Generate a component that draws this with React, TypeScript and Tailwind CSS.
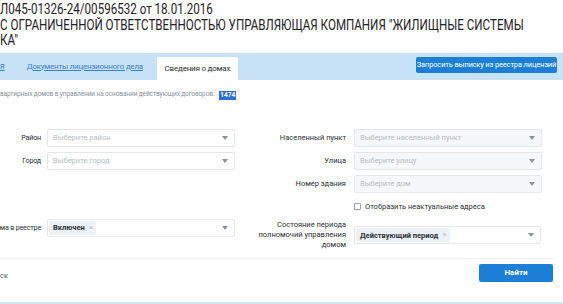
import React from "react";

const Arrow = () => (
  <svg width="6" height="4" viewBox="0 0 6 4" className="shrink-0">
    <path d="M0 0 H6 L3 4 Z" fill="#8c9197" />
  </svg>
);

const Select = ({ placeholder, disabled }: { placeholder: string; disabled?: boolean }) => (
  <div
    className={`flex h-[18px] w-[188px] shrink-0 items-center justify-between rounded-[2px] border border-[#e4e7ea] pl-[5px] pr-[6px] ${
      disabled ? "bg-[#f6f7f8]" : "bg-white"
    }`}
  >
    <span className="text-[7.5px] text-[#b8bcc1]">{placeholder}</span>
    <Arrow />
  </div>
);

const ChipSelect = ({ chip, w }: { chip: string; w: string }) => (
  <div className={`flex h-[18px] shrink-0 items-center justify-between rounded-[2px] border border-[#e4e7ea] bg-white pl-[1px] pr-[6px] ${w}`}>
    <div className="flex h-[14px] items-center gap-[4px] rounded-[2px] bg-[#edf1f5] pl-[4px] pr-[3px]">
      <span className="text-[7.5px] font-bold text-[#2b2f33]">{chip}</span>
      <span className="text-[8px] leading-none text-[#b9bec4]">×</span>
    </div>
    <Arrow />
  </div>
);

const LeftRow = ({ label, children }: { label: string; children: React.ReactNode }) => (
  <div className="flex items-center">
    <div className="flex w-[41px] shrink-0 justify-end">
      <span className="shrink-0 whitespace-nowrap text-[7.2px] tracking-[-0.2px] text-[#2b2f33]">{label}</span>
    </div>
    <div className="ml-[6px]">{children}</div>
  </div>
);

const RightRow = ({ label, children }: { label: React.ReactNode; children: React.ReactNode }) => (
  <div className="flex items-center">
    <div className="flex w-[64px] shrink-0 justify-end">
      <span className="shrink-0 whitespace-nowrap text-right text-[7.5px] leading-[10px] text-[#2b2f33]">{label}</span>
    </div>
    <div className="ml-[8px]">{children}</div>
  </div>
);

export default function App() {
  return (
    <div
      className="relative h-[304px] w-[563px] overflow-hidden bg-white"
      style={{ fontFamily: "Roboto, 'Liberation Sans', sans-serif" }}
    >
      {/* Title */}
      <div className="h-[53px] pt-[2px]">
        <div className="origin-left scale-x-[0.8] w-[704px] text-[14.5px] leading-[15.5px] text-[#1f2226]">
          <div>Л045-01326-24/00596532 от 18.01.2016</div>
          <div>С ОГРАНИЧЕННОЙ ОТВЕТСТВЕННОСТЬЮ УПРАВЛЯЮЩАЯ КОМПАНИЯ "ЖИЛИЩНЫЕ СИСТЕМЫ</div>
          <div>КА"</div>
        </div>
      </div>

      {/* Tab bar */}
      <div className="flex h-[27px] items-end bg-[#c7e2f7]">
        <div className="flex h-full items-center">
          <span className="text-[8.5px] text-[#3a82c8] underline">я</span>
        </div>
        <div className="ml-[22px] flex h-full items-center">
          <span className="text-[8px] tracking-[-0.25px] text-[#3a82c8] underline">Документы лицензионного дела</span>
        </div>
        <div className="ml-[14px] flex h-[23px] w-[81px] items-center justify-center rounded-t-[2px] bg-white">
          <span className="text-[8px] tracking-[-0.2px] text-[#2b2f33]">Сведения о домах</span>
        </div>
        <div className="ml-auto mr-[6px] flex h-full items-start pt-[4px]">
          <div className="flex h-[16px] w-[141px] items-center justify-center rounded-[2px] bg-[#1b7fd8]">
            <span className="text-[7.5px] tracking-[-0.15px] text-white">Запросить выписку из реестра лицензий</span>
          </div>
        </div>
      </div>

      {/* Count */}
      <div className="mt-[10px] flex h-[10px] items-center">
        <span className="text-[6.5px] tracking-[-0.1px] text-[#8b9096]">
          вартирных домов в управлении на основании действующих договоров:
        </span>
        <span className="ml-[5px] bg-[#2c6fd6] px-[1px] text-[6.5px] font-bold leading-[9px] text-white">1474</span>
      </div>

      {/* Form */}
      <div className="mt-[29px] flex">
        <div className="flex w-[282px] flex-col gap-[5px]">
          <LeftRow label="Район">
            <Select placeholder="Выберите район" />
          </LeftRow>
          <LeftRow label="Город">
            <Select placeholder="Выберите город" />
          </LeftRow>
          <div className="mt-[44px]">
            <LeftRow label="ма в реестре">
              <ChipSelect chip="Включен" w="w-[188px]" />
            </LeftRow>
          </div>
        </div>
        <div className="flex flex-col gap-[5px]">
          <RightRow label="Населенный пункт">
            <Select placeholder="Выберите населенный пункт" disabled />
          </RightRow>
          <RightRow label="Улица">
            <Select placeholder="Выберите улицу" disabled />
          </RightRow>
          <RightRow label="Номер здания">
            <Select placeholder="Выберите дом" disabled />
          </RightRow>
          <div className="ml-[72px] mt-[3px] flex items-center gap-[4px]">
            <div className="h-[7px] w-[7px] rounded-[1px] border border-[#9aa0a6] bg-white" />
            <span className="text-[7.5px] text-[#2b2f33]">Отобразить неактуальные адреса</span>
          </div>
          <div className="mt-[3px]">
            <RightRow
              label={
                <>
                  Состояние периода
                  <br />
                  полномочий управления
                  <br />
                  домом
                </>
              }
            >
              <ChipSelect chip="Действующий период" w="w-[187px]" />
            </RightRow>
          </div>
        </div>
      </div>

      {/* Separator */}
      <div className="mt-[8px] h-px w-[553px] bg-[#eceef0]" />

      {/* Footer */}
      <div className="flex items-start pr-[10px]">
        <span className="mt-[11px] text-[7.5px] text-[#4a4f55]">ск</span>
        <div className="ml-auto mt-[5px] flex h-[18px] w-[74px] items-center justify-center rounded-[2px] bg-[#1b7fd8]">
          <span className="text-[8px] font-bold text-white">Найти</span>
        </div>
      </div>

      <div className="absolute bottom-0 left-0 h-[2px] w-full bg-[#d3e8f7]" />
    </div>
  );
}
